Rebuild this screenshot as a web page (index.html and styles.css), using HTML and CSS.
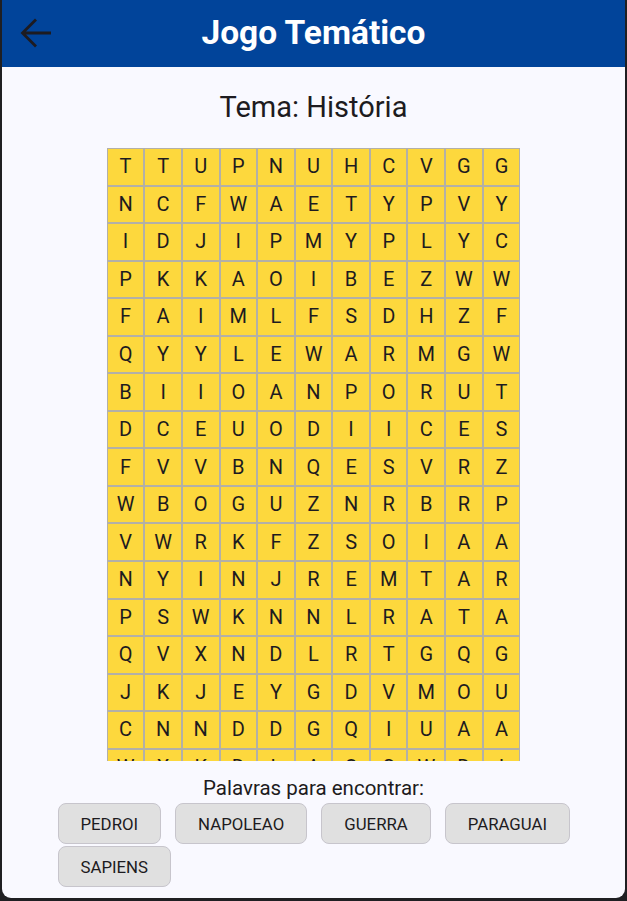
FILE: index.html
```html
<!DOCTYPE html>
<html lang="pt">
<head>
<meta charset="utf-8">
<title>Jogo Temático</title>
<link rel="stylesheet" href="styles.css">
</head>
<body>
<div class="app">
  <header class="appbar">
    <button class="back" aria-label="Voltar">
      <svg width="40" height="40" viewBox="0 0 40 40"><path d="M35 20H7M20 6.5L6.5 20L20 33.5" fill="none" stroke="#1d1b20" stroke-width="2.8"/></svg>
    </button>
    <h1 class="title">Jogo Temático</h1>
  </header>
  <main class="content">
    <h2 class="theme">Tema: História</h2>
    <div class="grid-view">
      <div class="grid" id="grid"></div>
    </div>
    <p class="label">Palavras para encontrar:</p>
    <div class="chips">
      <span class="chip">PEDROI</span>
      <span class="chip">NAPOLEAO</span>
      <span class="chip">GUERRA</span>
      <span class="chip">PARAGUAI</span>
      <span class="chip">SAPIENS</span>
    </div>
  </main>
</div>
<script>
var rows = [
"TTUPNUHCVGG","NCFWAETYPVY","IDJIPMYPLYC","PKKAOIBEZWW","FAIMLFSDHZF",
"QYYLEWARMGW","BIIOANPORUT","DCEUODIICES","FVVBNQESVRZ","WBOGUZNRBRP",
"VWRKFZSOIAA","NYINJREMTAR","PSWKNNLRATA","QVXNDLRTGQG","JKJEYGDVMOU",
"CNNDDGQIUAA","WXKDLAOSWDI","RTEBAMSOLKP"];
var g = document.getElementById('grid');
rows.forEach(function(r){ r.split('').forEach(function(c){ var d=document.createElement('div'); d.className='cell'; d.textContent=c; g.appendChild(d); }); });
</script>
</body>
</html>
```
FILE: styles.css
```css
* { box-sizing: border-box; }
html, body { margin: 0; padding: 0; }
body {
  background: #1f1f22;
  font-family: Roboto, "Noto Sans", sans-serif;
  color: #1d1b20;
  width: 627px;
  height: 901px;
  overflow: hidden;
}
.app {
  margin-left: 2px;
  width: 623px;
  height: 898px;
  background: #f9f9ff;
  border-radius: 0 0 9px 9px;
  overflow: hidden;
  display: flex;
  flex-direction: column;
}
.appbar {
  height: 67px;
  background: #01449a;
  display: flex;
  align-items: center;
  justify-content: center;
  position: relative;
}
.back {
  position: absolute;
  left: 14px;
  top: 13px;
  width: 40px;
  height: 40px;
  padding: 0;
  border: 0;
  background: none;
}
.back svg { display: block; }
.title {
  margin: 0 0 2px;
  color: #fff;
  font-size: 33.5px;
  font-weight: 700;
  line-height: 38px;
}
.content {
  display: flex;
  flex-direction: column;
  align-items: center;
}
.theme {
  margin: 23px 0 0;
  font-size: 29px;
  font-weight: 400;
  line-height: 34px;
}
.grid-view {
  margin-top: 24px;
  height: 613px;
  overflow: hidden;
}
.grid {
  display: grid;
  grid-template-columns: repeat(11, 37.6px);
  grid-auto-rows: 37.55px;
}
.cell {
  background: #fdd83d;
  border: 1px solid #b3b0a8;
  display: flex;
  align-items: center;
  justify-content: center;
  padding-bottom: 1px;
  font-size: 20px;
  color: #1d1b20;
}
.label {
  margin: 15px 0 0;
  font-size: 20.5px;
  line-height: 24px;
}
.chips {
  margin: 3px 0 0 2px;
  width: 514px;
  display: flex;
  flex-wrap: wrap;
  gap: 2px 14px;
}
.chip {
  height: 41px;
  padding: 0 22px;
  display: flex;
  align-items: center;
  background: #e0e0e0;
  border: 1px solid #c7c5cc;
  border-radius: 8px;
  font-size: 16.8px;
  color: #1d1b20;
}
```
